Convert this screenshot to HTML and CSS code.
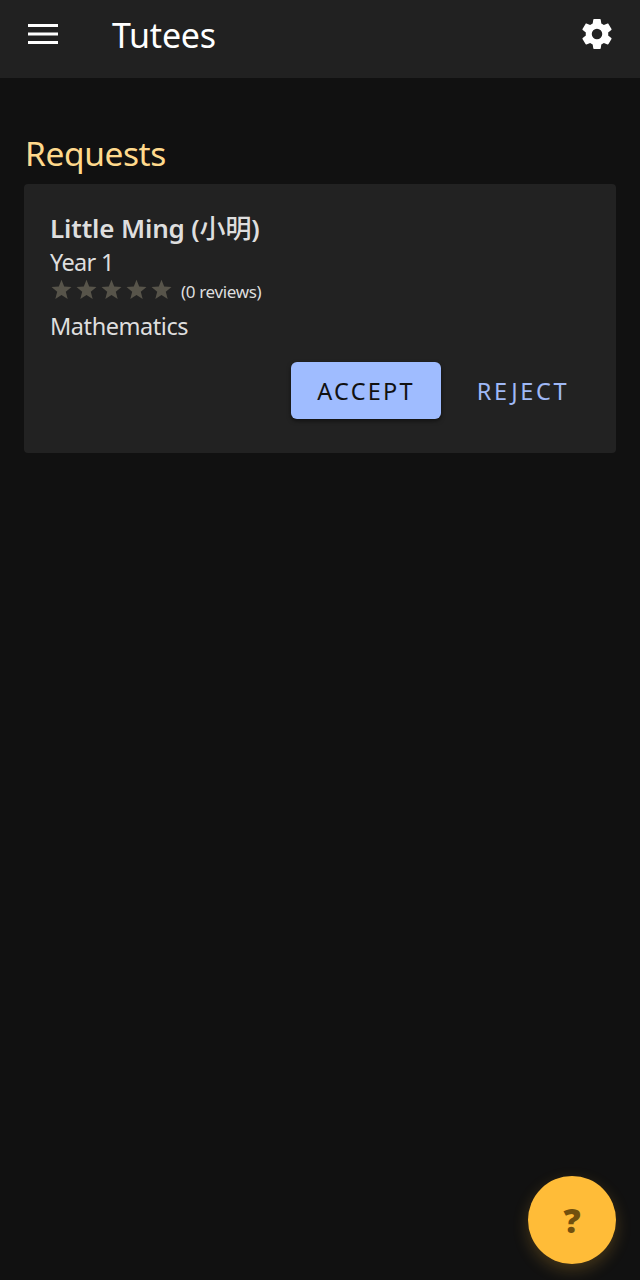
FILE: index.html
```
<!DOCTYPE html>
<html lang="en">
<head>
<meta charset="utf-8">
<title>Tutees</title>
<link rel="stylesheet" href="styles.css">
</head>
<body>
<header class="bar">
  <svg class="menu" viewBox="0 0 30 21"><path d="M0 0h30v3H0zM0 8.5h30v3H0zM0 17h30v3H0z"/></svg>
  <h1 class="title">Tutees</h1>
  <svg class="gear" viewBox="0 0 24 24"><path d="M12 15.5A3.5 3.5 0 0 1 8.5 12 3.5 3.5 0 0 1 12 8.5a3.5 3.5 0 0 1 3.5 3.5 3.5 3.5 0 0 1-3.5 3.5m7.43-2.53c.04-.32.07-.64.07-.97s-.03-.66-.07-1l2.11-1.63c.19-.15.24-.42.12-.64l-2-3.46c-.12-.22-.39-.31-.61-.22l-2.49 1c-.52-.39-1.06-.73-1.69-.98l-.37-2.65A.506.506 0 0 0 14 2h-4c-.25 0-.46.18-.5.42l-.37 2.65c-.63.25-1.17.59-1.69.98l-2.49-1c-.22-.09-.49 0-.61.22l-2 3.46c-.13.22-.07.49.12.64L4.57 11c-.04.34-.07.67-.07 1s.03.65.07.97l-2.11 1.66c-.19.15-.25.42-.12.64l2 3.46c.12.22.39.3.61.22l2.49-1.01c.52.4 1.06.74 1.69.99l.37 2.65c.04.24.25.42.5.42h4c.25 0 .46-.18.5-.42l.37-2.65c.63-.26 1.17-.59 1.69-.99l2.49 1.01c.22.08.49 0 .61-.22l2-3.46c.12-.22.07-.49-.12-.64z"/></svg>
</header>
<main class="page">
  <h2 class="heading">Requests</h2>
  <section class="card">
    <h3 class="name">Little Ming (<span class="cjk">小明</span>)</h3>
    <p class="year">Year 1</p>
    <div class="rating">
      <svg class="stars" viewBox="0 0 125 25">
        <defs><path id="star" d="M12.5 2.7l2.7 6.9 7.3.4-5.7 4.7 1.9 7.3-6.2-4.1-6.2 4.1 1.9-7.3L2.500 10l7.3-.4z"/></defs>
        <use href="#star"/><use href="#star" x="25"/><use href="#star" x="50"/><use href="#star" x="75"/><use href="#star" x="100"/>
      </svg>
      <span class="reviews">(0 reviews)</span>
    </div>
    <p class="subject">Mathematics</p>
    <div class="actions">
      <button class="btn accept">ACCEPT</button>
      <button class="btn reject">REJECT</button>
    </div>
  </section>
</main>
<button class="help">?</button>
</body>
</html>
```
FILE: styles.css
```
* { box-sizing: border-box; }
body {
  margin: 0;
  height: 1280px;
  overflow: hidden;
  background: #111;
  color: #dedede;
  font-family: "Noto Sans", "Noto Sans CJK SC", sans-serif;
}
h1, h2, h3, p { margin: 0; font-weight: 400; white-space: nowrap; }
svg { display: block; flex: none; }
button { border: 0; padding: 0; font-family: inherit; }
.bar {
  display: flex;
  height: 78px;
  padding: 0 25px 0 28px;
  background: #212121;
  color: #fff;
}
.menu { width: 30px; height: 21px; margin-top: 24px; fill: #fff; }
.title { margin: 12px 0 0 54px; font-size: 34px; line-height: 47px; letter-spacing: -.2px; }
.gear { width: 36px; height: 36px; margin: 16px 0 0 auto; fill: #fff; }
.page { padding: 51px 24px 0; }
.heading { height: 55px; padding-left: 1px; color: #ffd98c; font-size: 33.5px; line-height: 48px; letter-spacing: -.4px; }
.card {
  height: 269px;
  padding: 27px 25px 0;
  border-radius: 4px;
  background: #222;
}
.name { padding-left: 1px; font-size: 26px; line-height: 34px; font-weight: 600; letter-spacing: -.15px; }
.cjk { font-weight: 500; }
.year { padding-left: 1px; font-size: 23.5px; line-height: 34px; letter-spacing: -.7px; }
.rating { display: flex; height: 29px; }
.stars { width: 125px; height: 25px; margin-top: -2px; fill: #57544a; }
.reviews { margin-left: 7px; font-size: 17px; line-height: 26px; letter-spacing: -.35px; white-space: nowrap; }
.subject { padding-left: 1px; font-size: 23.5px; line-height: 36px; letter-spacing: -.45px; }
.actions { display: flex; justify-content: flex-end; margin-top: 18px; }
.btn {
  height: 57px;
  border-radius: 6px;
  font-size: 23.5px;
  line-height: 59px;
  letter-spacing: 2.2px;
  white-space: nowrap;
}
.accept { width: 150px; background: #9fbcff; color: #111; box-shadow: 0 2px 4px rgba(0, 0, 0, .5); }
.reject { width: 138px; margin-left: 13px; margin-right: -1px; background: none; color: #9fb8f6; letter-spacing: 2.7px; }
.help {
  position: absolute;
  left: 528px;
  top: 1176px;
  width: 88px;
  height: 88px;
  border-radius: 50%;
  background: #ffbc38;
  color: #72500e;
  box-shadow: 0 6px 16px rgba(255, 188, 56, .22);
  font-size: 34px;
  line-height: 87px;
  font-weight: 900;
}
```
